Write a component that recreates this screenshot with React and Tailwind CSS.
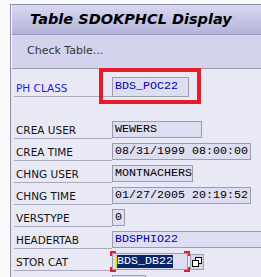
import React from 'react'

const rows = [
  { label: 'CREA USER', value: 'WEWERS', width: 'w-[90px]' },
  { label: 'CREA TIME', value: '08/31/1999 08:00:00', width: 'w-[139px]' },
  { label: 'CHNG USER', value: 'MONTNACHERS', width: 'w-[81px]' },
  { label: 'CHNG TIME', value: '01/27/2005 20:19:52', width: 'w-[139px]' },
  { label: 'VERSTYPE', value: '0', width: 'w-[13px]' },
  { label: 'HEADERTAB', value: 'BDSPHIO22', width: 'w-[170px]', blue: true },
]

function Label({ children, blue }) {
  return (
    <div
      className={`w-[98px] h-full shrink-0 flex items-end pb-[1px] pl-[2px] border-b border-[#a9a9bd] text-[10.5px] leading-[13px] ${blue ? 'text-[#1c1ce6]' : 'text-[#111111]'}`}
    >
      {children}
    </div>
  )
}

function Field({ value, width, blue }) {
  return (
    <div
      className={`${width} h-[17px] mb-[1px] shrink-0 flex items-center pl-[2px] bg-[#dedef2] border border-[#9d9da8] font-['Liberation_Mono',monospace] text-[11.67px] leading-none whitespace-nowrap overflow-hidden ${blue ? 'text-[#0000b0]' : 'text-[#000000]'}`}
    >
      {value}
    </div>
  )
}

// copy icon for the value help button
function CopyIcon() {
  return (
    <svg width="12" height="12" viewBox="0 0 12 12">
      <rect x="4.5" y="1.5" width="6" height="6" fill="#ffffff" stroke="#000000" />
      <rect x="1.5" y="4.5" width="6" height="6" fill="#ffffff" stroke="#000000" />
    </svg>
  )
}

export default function App() {
  return (
    <div className="w-[261px] h-[277px] overflow-hidden flex bg-[#fafafa] font-['DejaVu_Sans',sans-serif]">
      <div className="w-[10px] shrink-0" />
      <div className="flex-1 flex flex-col mt-[4px] border-l border-t border-[#8e8eae]">
        {/* Title bar */}
        <div className="h-[30px] shrink-0 flex items-center pl-[18px] bg-gradient-to-b from-[#d9d9f0] to-[#b3b3da] border-b border-[#9c9cc4] border-l border-l-white">
          <span className="text-[14.5px] font-bold italic text-black whitespace-nowrap">
            Table SDOKPHCL Display
          </span>
        </div>

        {/* Toolbar */}
        <div className="h-[34px] shrink-0 flex items-center pl-[15px] bg-[#d3d3ed] border-b border-[#9a9aae] border-l border-l-white">
          <span className="text-[11px] text-[#333333]">Check Table...</span>
        </div>

        {/* Content */}
        <div className="flex-1 flex flex-col pt-[6px] pl-[3px] bg-[#e9e9f5]">
          <div className="h-[22px] flex items-end">
            <Label blue>PH CLASS</Label>
            <div className="relative self-start mt-[2px]">
              <div className="w-[77px] h-[20px] flex items-center pl-[2px] bg-[#dedef2] border border-[#9d9da8] font-['Liberation_Mono',monospace] text-[11.67px] leading-none text-[#0000b0]">
                BDS_POC22
              </div>
              <div className="absolute -left-[13px] -top-[9px] w-[102px] h-[36px] border-4 border-[#e81c28]" />
            </div>
          </div>

          <div className="h-[20px]" />

          {rows.map(r => (
            <div key={r.label} className="h-[22px] flex items-end">
              <Label>{r.label}</Label>
              <Field value={r.value} width={r.width} blue={r.blue} />
            </div>
          ))}

          {/* STOR CAT with selected value */}
          <div className="h-[22px] flex items-end">
            <Label>STOR CAT</Label>
            <div className="relative mb-[1px]">
              <div className="w-[76px] h-[17px] flex items-center pl-[2px] bg-[#dedef2] border border-[#9d9da8] font-['Liberation_Mono',monospace] text-[11.67px] leading-none">
                <span className="w-[2px] h-[13px] bg-[#f5e600]" />
                <span className="bg-[#0a246a] text-white leading-[13px]">BDS_DB22</span>
              </div>
              <div className="absolute -left-[2px] -top-[2px] w-[6px] h-[5px] border-l-2 border-t-2 border-[#e81c28]" />
              <div className="absolute -right-[2px] -top-[2px] w-[6px] h-[5px] border-r-2 border-t-2 border-[#e81c28]" />
              <div className="absolute -left-[2px] -bottom-[2px] w-[6px] h-[5px] border-l-2 border-b-2 border-[#e81c28]" />
              <div className="absolute -right-[2px] -bottom-[2px] w-[6px] h-[5px] border-r-2 border-b-2 border-[#e81c28]" />
            </div>
            <div className="ml-[2px] mb-[1px] w-[14px] h-[16px] flex items-center justify-center bg-[#d4d4ea] border border-[#a2a2b6]">
              <CopyIcon />
            </div>
          </div>

          <div className="h-[22px] flex items-end">
            <div className="w-[98px] h-full shrink-0" />
            <div className="self-start mt-[4px] w-[34px] h-[17px] bg-[#dedef2] border border-[#9d9da8]" />
          </div>
        </div>
      </div>
    </div>
  )
}
